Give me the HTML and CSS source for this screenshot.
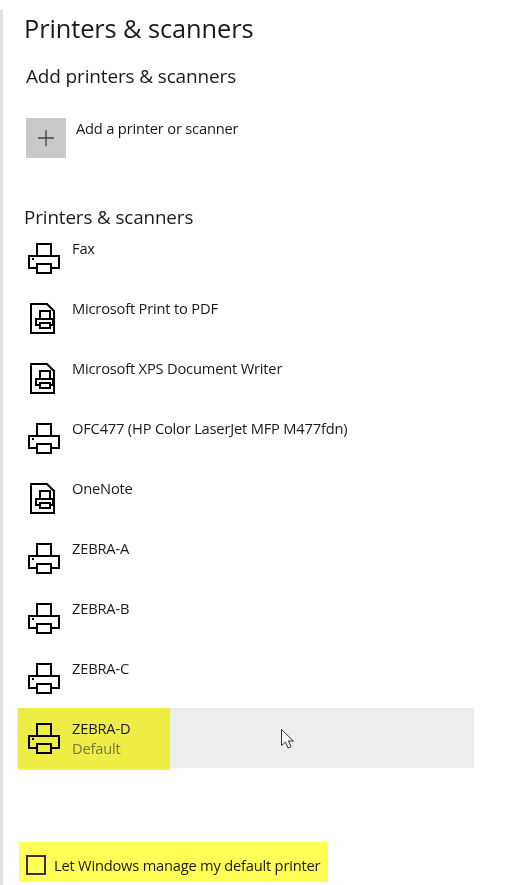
FILE: index.html
```html
<!DOCTYPE html>
<html lang="en">
<head>
    <meta charset="UTF-8">
    <meta name="viewport" content="width=device-width, initial-scale=1.0">
    <title>Printers &amp; scanners</title>
    <link rel="stylesheet" href="styles.css">
</head>
<body>
    <svg class="defs" width="0" height="0">
        <symbol id="printer" viewBox="0 0 34 34">
            <path d="M10 14V2h14v12M10 26H2V14h30v12h-8M10 22h14v9H10z" fill="none" stroke="currentColor" stroke-width="2"/>
            <rect x="5" y="16" width="2" height="2" fill="currentColor"/>
        </symbol>
        <symbol id="docprinter" viewBox="0 0 34 34">
            <path d="M4 2h16l7 7v22H4z" fill="none" stroke="currentColor" stroke-width="2"/>
            <path d="M13 17V9h10v8M13 23H9v-6h17v6h-3M13 21h10v5H13z" fill="none" stroke="currentColor" stroke-width="2"/>
        </symbol>
    </svg>

    <div class="page">
        <h1 class="title">Printers &amp; scanners</h1>
        <h2 class="add-heading">Add printers &amp; scanners</h2>
        <div class="add-row">
            <div class="add-tile">
                <svg width="20" height="20" viewBox="0 0 20 20"><path d="M10 2v16M2 10h16" stroke="#444" stroke-width="1.3"/></svg>
            </div>
            <div class="add-label">Add a printer or scanner</div>
        </div>

        <h2 class="list-heading">Printers &amp; scanners</h2>
        <div class="list">
            <div class="row">
                <svg class="icon"><use href="#printer"/></svg>
                <div class="name">Fax</div>
            </div>
            <div class="row">
                <svg class="icon"><use href="#docprinter"/></svg>
                <div class="name">Microsoft Print to PDF</div>
            </div>
            <div class="row">
                <svg class="icon"><use href="#docprinter"/></svg>
                <div class="name">Microsoft XPS Document Writer</div>
            </div>
            <div class="row">
                <svg class="icon"><use href="#printer"/></svg>
                <div class="name">OFC477 (HP Color LaserJet MFP M477fdn)</div>
            </div>
            <div class="row">
                <svg class="icon"><use href="#docprinter"/></svg>
                <div class="name">OneNote</div>
            </div>
            <div class="row">
                <svg class="icon"><use href="#printer"/></svg>
                <div class="name">ZEBRA-A</div>
            </div>
            <div class="row">
                <svg class="icon"><use href="#printer"/></svg>
                <div class="name">ZEBRA-B</div>
            </div>
            <div class="row">
                <svg class="icon"><use href="#printer"/></svg>
                <div class="name">ZEBRA-C</div>
            </div>
            <div class="row selected">
                <svg class="icon"><use href="#printer"/></svg>
                <div>
                    <div class="name">ZEBRA-D</div>
                    <div class="status">Default</div>
                </div>
                <div class="marker"></div>
                <svg class="cursor" width="14" height="22" viewBox="0 0 14 22">
                    <path d="M1.5 1.5v16l4-3.5 2.5 6 3-1.2-2.6-5.8h5z" fill="#fff" stroke="#333" stroke-width="1"/>
                </svg>
            </div>
        </div>

        <div class="manage">
            <span class="checkbox"></span>
            <span class="manage-label">Let Windows manage my default printer</span>
        </div>
    </div>
</body>
</html>
```

FILE: styles.css
```css
html, body {
    margin: 0;
    height: 100%;
}
body {
    font-family: "Open Sans", "Liberation Sans", sans-serif;
    color: #1a1a1a;
    background: #fff;
    overflow: hidden;
}
.defs {
    display: block;
    height: 0;
}
.page {
    box-sizing: border-box;
    height: 885px;
    border-left: 3px solid #e2e2e2;
    padding: 0 48px 0 14px;
}
.title {
    margin: 10px 0 0 7px;
    font-size: 25.4px;
    line-height: 36px;
    font-weight: 400;
    letter-spacing: -0.1px;
}
.add-heading {
    margin: 17px 0 0 9px;
    font-size: 19px;
    line-height: 26px;
    font-weight: 400;
    letter-spacing: -0.15px;
}
.add-row {
    display: flex;
    gap: 10px;
    margin: 29px 0 0 9px;
}
.add-tile {
    width: 40px;
    height: 40px;
    background: #c9c9c9;
    display: flex;
    align-items: center;
    justify-content: center;
}
.add-label {
    font-size: 14.7px;
    line-height: 20px;
    letter-spacing: -0.2px;
}
.list-heading {
    margin: 46px 0 0 7px;
    font-size: 18.8px;
    line-height: 26px;
    font-weight: 400;
    letter-spacing: -0.1px;
}
.list {
    margin-top: -2px;
}
.row {
    position: relative;
    display: flex;
    gap: 11px;
    height: 60px;
    box-sizing: border-box;
    padding: 10px 0 0 10px;
}
.icon {
    width: 34px;
    height: 34px;
    margin-top: 4px;
    flex: none;
    color: #000;
}
.name {
    font-size: 14.7px;
    line-height: 20px;
    letter-spacing: -0.2px;
}
.status {
    font-size: 14.7px;
    line-height: 20px;
    letter-spacing: -0.2px;
    color: #777;
}
.selected {
    background: #ededed;
}
/* highlighter marks from the annotated screenshot */
.marker {
    position: absolute;
    left: 1px;
    top: 0;
    width: 152px;
    height: 62px;
    background: #f2f246;
    mix-blend-mode: darken;
}
.cursor {
    position: absolute;
    left: 263px;
    top: 20px;
}
.manage {
    display: flex;
    align-items: center;
    gap: 8px;
    width: 309px;
    height: 40px;
    box-sizing: border-box;
    margin: 74px 0 0 2px;
    padding: 6px 0 0 7px;
    background: #ffff55;
    font-size: 14.66px;
}
.checkbox {
    box-sizing: border-box;
    width: 20px;
    height: 20px;
    flex: none;
    border: 2px solid #333;
}
.manage-label {
    letter-spacing: -0.2px;
}
```
